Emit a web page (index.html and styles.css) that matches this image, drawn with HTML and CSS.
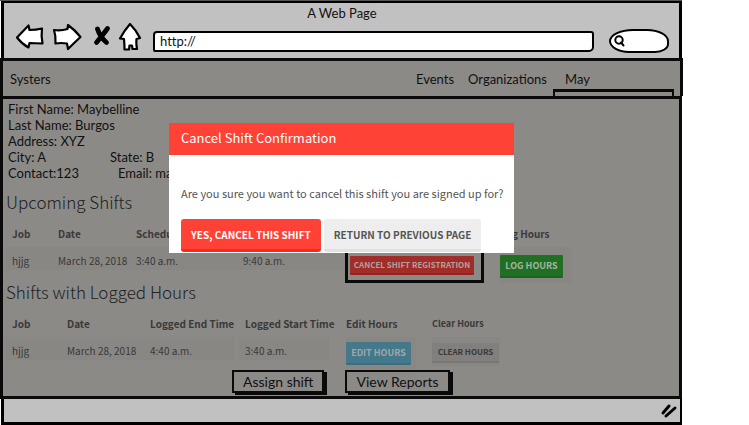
FILE: index.html
```html
<!DOCTYPE html>
<html lang="en">
<head>
<meta charset="utf-8">
<title>A Web Page</title>
<link rel="stylesheet" href="styles.css">
</head>
<body>
<div class="window">
  <header class="chrome">
    <div class="title">A Web Page</div>
    <div class="toolbar">
      <svg class="icons" width="128" height="28" viewBox="14 23 128 28" fill="#fff" stroke="#000" stroke-width="2.2" stroke-linejoin="round" stroke-linecap="round">
        <path d="M17 37.500L28.500 25.500L29.500 30Q36 30 42 28.500Q41 36 42.500 43.500Q35 43 29.500 43L28.500 47.500Q22 44 17 37.500Z"/>
        <path d="M54 30Q61 31 67.500 29L68 25Q75 30 80.500 37Q74 43 68 49L67 43.500Q61 42.500 55.500 43.500Q56 36 54 30Z"/>
        <path d="M97.500 29Q100 37 106.500 42.500M107.500 28.500Q102 36 96.500 42.500" stroke-width="4.800"/>
        <path d="M130 24Q136 30 140 38L136.500 39Q136 44 137 49H132.500L132 45.500H129.500L129 49.500H124.500Q124.500 44 124 39L120 38.500Q124 31 130 24Z"/>
      </svg>
      <input class="url" type="text" value="http://" aria-label="Address">
      <label class="search">
        <svg width="12" height="12" viewBox="0 0 12 12" fill="none" stroke="#000" stroke-width="2" stroke-linecap="round"><circle cx="5" cy="5" r="3.700"/><path d="M7 7.500L9.500 10.500"/></svg>
        <input type="search" aria-label="Search">
      </label>
    </div>
  </header>
  <nav class="nav">
    <a class="brand" href="#">Systers</a>
    <a href="#">Events</a>
    <a href="#">Organizations</a>
    <a class="user" href="#">May</a>
  </nav>
  <main class="content">
    <div class="info">
      <div>First Name: Maybelline</div>
      <div>Last Name: Burgos</div>
      <div>Address: XYZ</div>
      <div class="pair"><span class="city">City: A</span><span>State: B</span></div>
      <div class="pair"><span class="contact">Contact:123</span><span>Email: may</span></div>
    </div>
    <h2 class="first">Upcoming Shifts</h2>
    <table class="upcoming">
      <colgroup><col class="c1"><col class="c2"><col class="c3"><col class="c4"><col class="c5"><col></colgroup>
      <thead><tr><th>Job</th><th>Date</th><th>Scheduled</th><th></th><th></th><th class="flush">Log Hours</th></tr></thead>
      <tbody><tr>
        <td><div class="cell">hjjg</div></td>
        <td><div class="cell">March 28, 2018</div></td>
        <td><div class="cell">3:40 a.m.</div></td>
        <td><div class="cell">9:40 a.m.</div></td>
        <td><div class="marked"><button class="btn red">CANCEL SHIFT REGISTRATION</button></div></td>
        <td><div class="slot log"><button class="btn green">LOG HOURS</button></div></td>
      </tr></tbody>
    </table>
    <h2>Shifts with Logged Hours</h2>
    <table class="logged">
      <colgroup><col class="c1"><col class="c2"><col class="c3"><col class="c4"><col class="c5"><col></colgroup>
      <thead><tr><th>Job</th><th>Date</th><th>Logged End Time</th><th>Logged Start Time</th><th class="flush">Edit Hours</th><th class="flush small">Clear Hours</th></tr></thead>
      <tbody><tr>
        <td><div class="cell">hjjg</div></td>
        <td><div class="cell">March 28, 2018</div></td>
        <td><div class="cell end">4:40 a.m.</div></td>
        <td><div class="cell end">3:40 a.m.</div></td>
        <td><div class="slot edit"><button class="btn blue">EDIT HOURS</button></div></td>
        <td><div class="slot clear"><button class="btn grey">CLEAR HOURS</button></div></td>
      </tr></tbody>
    </table>
    <div class="actions">
      <button class="sketch">Assign shift</button>
      <button class="sketch">View Reports</button>
    </div>
  </main>
  <footer class="status">
    <svg width="18" height="16" viewBox="0 0 18 16" stroke="#000" stroke-width="3" stroke-linecap="round"><path d="M3 10L9 3M6 13L15 5"/></svg>
  </footer>
  <div class="modal" role="dialog" aria-labelledby="dialog-title">
    <h3 id="dialog-title">Cancel Shift Confirmation</h3>
    <p>Are you sure you want to cancel this shift you are signed up for?</p>
    <div class="choices">
      <button class="yes">YES, CANCEL THIS SHIFT</button>
      <button class="back">RETURN TO PREVIOUS PAGE</button>
    </div>
  </div>
</div>
</body>
</html>
```
FILE: styles.css
```css
* { box-sizing: border-box; }
body {
  margin: 0;
  background: #fff;
  color: #111;
  font: 13px/16px Lato, sans-serif;
}
button, input { font: inherit; color: inherit; margin: 0; }
a { color: inherit; text-decoration: none; }

.window {
  position: relative;
  margin-right: 67px;
  border-top: 1px solid #555;
}
.chrome {
  border: 3px solid #000;
  border-width: 2px 3px 0;
  margin-left: 1px;
  background: #c1c1c1;
  padding: 2px 10px 6px 11px;
}
.title { text-align: center; line-height: 17px; }
.toolbar { display: flex; align-items: center; gap: 11px; height: 30px; }
.icons { flex: none; margin: 0 0 0 -1px; }
.url {
  flex: 1;
  min-width: 0;
  height: 21px;
  margin-top: 8px;
  padding: 0 5px;
  border: 2px solid #000;
  border-radius: 4px 3px 5px 2px;
  background: #fff;
  font-variant-ligatures: none;
}
.search {
  display: flex;
  align-items: center;
  width: 60px;
  height: 24px;
  margin: 8px 0 0 4px;
  padding: 0 3px;
  border: 2px solid #000;
  border-radius: 24px 22px 14px 20px / 12px 12px 9px 12px;
  background: #fff;
}
.search svg { flex: none; }
.search input { width: 30px; border: 0; padding: 0; background: none; outline: 0; }

.nav {
  display: flex;
  align-items: center;
  height: 38px;
  margin-right: -1px;
  padding: 0 6px 0 7px;
  gap: 14px;
  border: 3px solid #0b0a0a;
  border-bottom: 0;
  background: #8c8a87;
}
.brand { margin-right: auto; }
.user {
  align-self: flex-end;
  width: 121px;
  height: 35px;
  margin-left: -8px;
  padding: 10px 12px 0;
  background: linear-gradient(#0b0a0a, #0b0a0a) 0 28px / 100% 3px no-repeat,
    linear-gradient(#0b0a0a, #0b0a0a) 0 28px / 2px 7px no-repeat,
    linear-gradient(#0b0a0a, #0b0a0a) 100% 28px / 2px 7px no-repeat;
}

.content {
  border: 3px solid #0b0a0a;
  background: #8c8a87;
  padding: 2px 3px 1px;
}
.info { padding-left: 2px; }
.pair { display: flex; }
.city { width: 102px; }
.contact { width: 110px; }

h2, table, .modal {
  font-family: "Noto Sans CJK SC", sans-serif;
}
h2 {
  margin: 0 0 10px;
  font-size: 17px;
  font-weight: 300;
  line-height: 18px;
  color: #222;
}
.first { margin-top: 12px; }

table {
  width: 100%;
  table-layout: fixed;
  border-collapse: collapse;
  font-size: 10px;
  line-height: 14px;
  color: #3a3938;
  white-space: nowrap;
}
th {
  height: 26px;
  padding: 0 6px;
  text-align: left;
  font-weight: 700;
}
td { padding: 0; vertical-align: top; }
.cell { height: 23px; padding: 7px 6px 0; background: #898784; }
.upcoming .c1 { width: 46px; }
.upcoming .c2 { width: 78px; }
.upcoming .c3 { width: 107px; }
.upcoming .c4 { width: 108px; }
.upcoming .c5 { width: 155px; }
.upcoming td { height: 36px; }
.logged .c1 { width: 55px; }
.logged .c2 { width: 83px; }
.logged .c3 { width: 95px; }
.logged .c4 { width: 107px; }
.logged .c5 { width: 86px; }
.logged td { height: 33px; }
.end { width: 90px; }
th.flush { padding: 0; }
.small { font-size: 9px; }
.marked {
  width: 139px;
  height: 36px;
  padding: 6px 2px;
  border: 3px solid #0b0a0a;
}
.slot { background: #898784; }
.log { width: 72px; height: 36px; padding-top: 8px; }
.edit { width: 70px; height: 32px; padding-top: 5px; }
.clear { width: 68px; height: 29px; padding-top: 6px; }
.btn {
  display: block;
  padding: 0;
  border: 0;
  border-bottom: 2px solid;
  border-radius: 1px;
  font-size: 9px;
  font-weight: 700;
  line-height: 18px;
  white-space: nowrap;
}
.red { width: 124px; height: 19px; font-size: 8px; line-height: 16px; background: #a22c27; border-color: #97231e; color: #b3a09d; }
.green { width: 63px; height: 23px; background: #216f22; border-color: #1d621e; color: #a3b3a0; }
.blue { width: 65px; height: 23px; background: #46788b; border-color: #3c6c80; color: #9aa9ac; }
.grey { width: 67px; height: 20px; font-size: 8px; background: #82807e; border-color: #787674; color: #3a3938; }

.actions { display: flex; gap: 18px; padding-left: 226px; }
.sketch {
  height: 23px;
  margin: 0 3px 2px 0;
  padding: 0 9px;
  border: 2px solid #0b0a0a;
  background: #8c8a87;
  box-shadow: 3px 2px 0 #0b0a0a;
  font-size: 14px;
  line-height: 18px;
}

.status {
  display: flex;
  justify-content: flex-end;
  align-items: center;
  height: 26px;
  margin-left: 1px;
  padding-right: 2px;
  border: 3px solid #000;
  border-width: 0 2px 3px 3px;
  background: #c1c1c1;
}

.modal {
  position: absolute;
  top: 122px;
  left: 169px;
  width: 345px;
  height: 130px;
  background: #fff;
  color: #555;
}
h3 {
  margin: 0;
  padding: 0 12px 2px;
  background: #ff4136;
  color: #fff;
  font-size: 13px;
  font-weight: 400;
  line-height: 30px;
}
.modal p {
  margin: 28px 0 16px;
  padding-left: 12px;
  font-size: 11px;
  line-height: 20px;
  white-space: nowrap;
}
.choices { display: flex; gap: 3px; padding-left: 12px; }
.choices button {
  height: 33px;
  padding: 0 10px;
  border: 0;
  border-bottom: 3px solid;
  border-radius: 3px;
  font-size: 10px;
  font-weight: 700;
  line-height: 29px;
  white-space: nowrap;
}
.choices .yes { background: #ff4136; border-color: #ff251a; color: #fff; }
.choices .back { background: #eee; border-color: #e1e1e1; color: #555; }
```
